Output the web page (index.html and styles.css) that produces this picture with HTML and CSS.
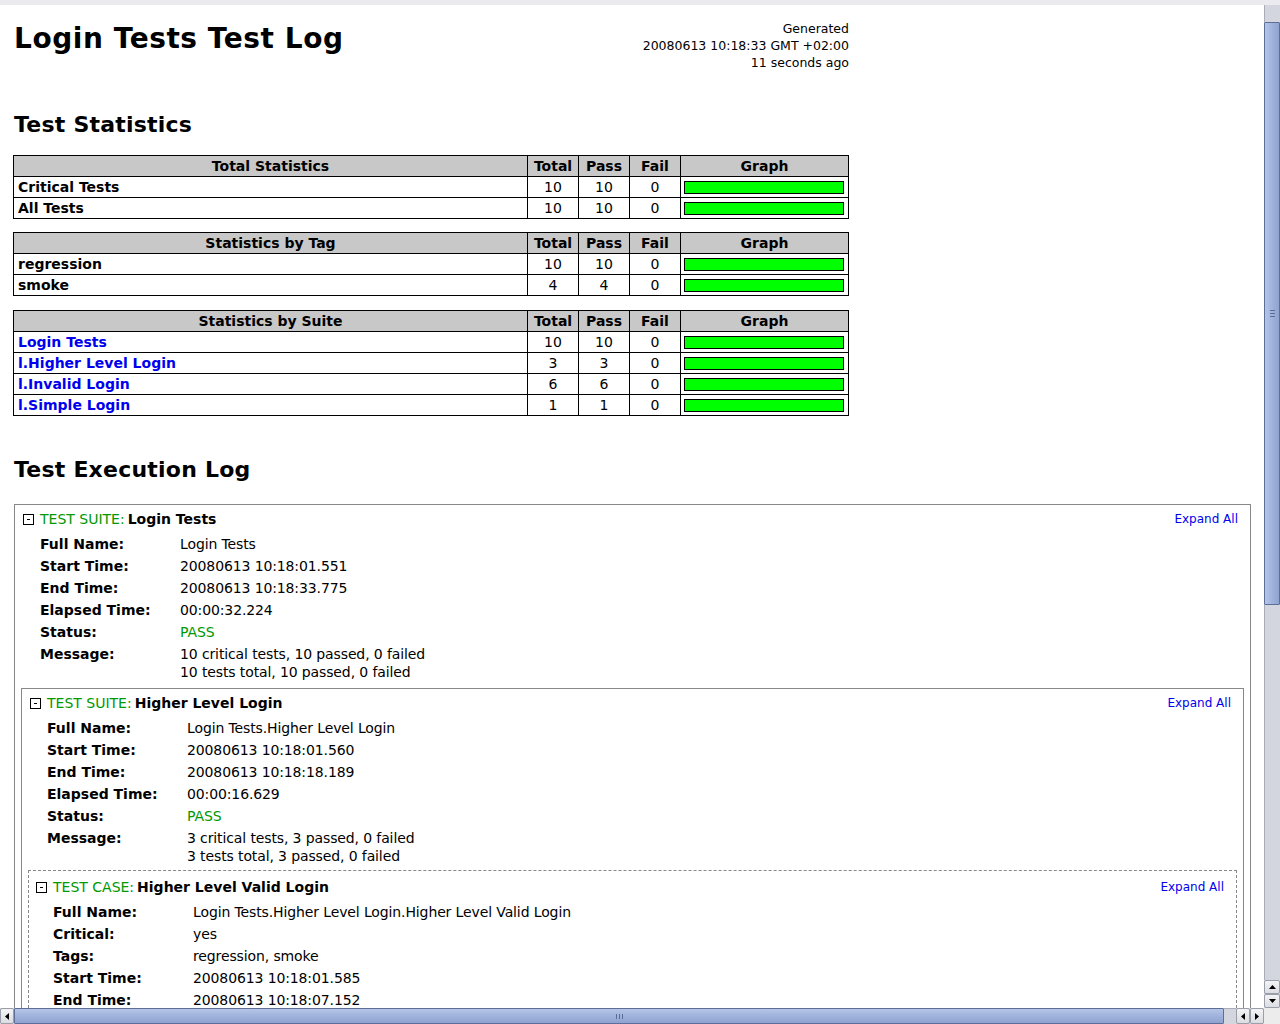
FILE: index.html
```html
<!DOCTYPE html>
<html>
<head>
<meta charset="utf-8">
<title>Login Tests Test Log</title>
<link rel="stylesheet" href="styles.css">
</head>
<body>
<div class="window">
  <div class="topbar"></div>
  <div class="main">
    <div class="viewport">
      <div class="page">
        <div class="header">
          <h1 class="title">Login Tests Test Log</h1>
          <div class="generated">Generated<br>20080613 10:18:33 GMT +02:00<br>11 seconds ago</div>
        </div>

        <h2 class="section stats-title">Test Statistics</h2>

        <table class="stats first">
          <colgroup><col class="c-name"><col class="c-num"><col class="c-num"><col class="c-num"><col class="c-graph"></colgroup>
          <tr><th>Total Statistics</th><th>Total</th><th>Pass</th><th>Fail</th><th>Graph</th></tr>
          <tr><td class="name">Critical Tests</td><td class="num">10</td><td class="num">10</td><td class="num">0</td><td class="graph"><div class="bar"></div></td></tr>
          <tr><td class="name">All Tests</td><td class="num">10</td><td class="num">10</td><td class="num">0</td><td class="graph"><div class="bar"></div></td></tr>
        </table>

        <table class="stats">
          <colgroup><col class="c-name"><col class="c-num"><col class="c-num"><col class="c-num"><col class="c-graph"></colgroup>
          <tr><th>Statistics by Tag</th><th>Total</th><th>Pass</th><th>Fail</th><th>Graph</th></tr>
          <tr><td class="name">regression</td><td class="num">10</td><td class="num">10</td><td class="num">0</td><td class="graph"><div class="bar"></div></td></tr>
          <tr><td class="name">smoke</td><td class="num">4</td><td class="num">4</td><td class="num">0</td><td class="graph"><div class="bar"></div></td></tr>
        </table>

        <table class="stats">
          <colgroup><col class="c-name"><col class="c-num"><col class="c-num"><col class="c-num"><col class="c-graph"></colgroup>
          <tr><th>Statistics by Suite</th><th>Total</th><th>Pass</th><th>Fail</th><th>Graph</th></tr>
          <tr><td class="name"><a href="#">Login Tests</a></td><td class="num">10</td><td class="num">10</td><td class="num">0</td><td class="graph"><div class="bar"></div></td></tr>
          <tr><td class="name"><a href="#">l.Higher Level Login</a></td><td class="num">3</td><td class="num">3</td><td class="num">0</td><td class="graph"><div class="bar"></div></td></tr>
          <tr><td class="name"><a href="#">l.Invalid Login</a></td><td class="num">6</td><td class="num">6</td><td class="num">0</td><td class="graph"><div class="bar"></div></td></tr>
          <tr><td class="name"><a href="#">l.Simple Login</a></td><td class="num">1</td><td class="num">1</td><td class="num">0</td><td class="graph"><div class="bar"></div></td></tr>
        </table>

        <h2 class="section log-title">Test Execution Log</h2>

        <div class="box suite top-suite">
          <div class="box-head">
            <svg class="toggle" width="11" height="11" viewBox="0 0 11 11"><rect x="0.5" y="0.5" width="10" height="10" fill="#fff" stroke="#000"/><rect x="4" y="5" width="3" height="1" fill="#000"/></svg>
            <span class="kind">TEST SUITE:</span>
            <span class="box-name">Login Tests</span>
            <a class="expand" href="#">Expand All</a>
          </div>
          <table class="details">
            <tr><th>Full Name:</th><td>Login Tests</td></tr>
            <tr><th>Start Time:</th><td>20080613 10:18:01.551</td></tr>
            <tr><th>End Time:</th><td>20080613 10:18:33.775</td></tr>
            <tr><th>Elapsed Time:</th><td>00:00:32.224</td></tr>
            <tr><th>Status:</th><td class="pass">PASS</td></tr>
            <tr><th>Message:</th><td>10 critical tests, 10 passed, 0 failed<br>10 tests total, 10 passed, 0 failed</td></tr>
          </table>

          <div class="box suite">
            <div class="box-head">
              <svg class="toggle" width="11" height="11" viewBox="0 0 11 11"><rect x="0.5" y="0.5" width="10" height="10" fill="#fff" stroke="#000"/><rect x="4" y="5" width="3" height="1" fill="#000"/></svg>
              <span class="kind">TEST SUITE:</span>
              <span class="box-name">Higher Level Login</span>
              <a class="expand" href="#">Expand All</a>
            </div>
            <table class="details">
              <tr><th>Full Name:</th><td>Login Tests.Higher Level Login</td></tr>
              <tr><th>Start Time:</th><td>20080613 10:18:01.560</td></tr>
              <tr><th>End Time:</th><td>20080613 10:18:18.189</td></tr>
              <tr><th>Elapsed Time:</th><td>00:00:16.629</td></tr>
              <tr><th>Status:</th><td class="pass">PASS</td></tr>
              <tr><th>Message:</th><td>3 critical tests, 3 passed, 0 failed<br>3 tests total, 3 passed, 0 failed</td></tr>
            </table>

            <div class="box test">
              <div class="box-head">
                <svg class="toggle" width="11" height="11" viewBox="0 0 11 11"><rect x="0.5" y="0.5" width="10" height="10" fill="#fff" stroke="#000"/><rect x="4" y="5" width="3" height="1" fill="#000"/></svg>
                <span class="kind">TEST CASE:</span>
                <span class="box-name">Higher Level Valid Login</span>
                <a class="expand" href="#">Expand All</a>
              </div>
              <table class="details">
                <tr><th>Full Name:</th><td>Login Tests.Higher Level Login.Higher Level Valid Login</td></tr>
                <tr><th>Critical:</th><td>yes</td></tr>
                <tr><th>Tags:</th><td>regression, smoke</td></tr>
                <tr><th>Start Time:</th><td>20080613 10:18:01.585</td></tr>
                <tr><th>End Time:</th><td>20080613 10:18:07.152</td></tr>
              </table>
            </div>
          </div>
        </div>
      </div>
    </div>
    <div class="vscroll">
      <div class="vtrack vtrack-top"></div>
      <div class="vthumb"><span class="grip-v"></span></div>
      <div class="vtrack vtrack-rest"></div>
      <div class="sbtn"><svg width="7" height="4" viewBox="0 0 7 4"><polygon points="3.5,0 7,4 0,4" fill="#000"/></svg></div>
      <div class="sbtn"><svg width="7" height="4" viewBox="0 0 7 4"><polygon points="0,0 7,0 3.5,4" fill="#000"/></svg></div>
    </div>
  </div>
  <div class="hscroll">
    <div class="sbtn hbtn"><svg width="4" height="7" viewBox="0 0 4 7"><polygon points="0,3.5 4,0 4,7" fill="#000"/></svg></div>
    <div class="hthumb"><span class="grip-h"></span></div>
    <div class="htrack"></div>
    <div class="sbtn hbtn"><svg width="4" height="7" viewBox="0 0 4 7"><polygon points="0,3.5 4,0 4,7" fill="#000"/></svg></div>
    <div class="sbtn hbtn"><svg width="4" height="7" viewBox="0 0 4 7"><polygon points="0,0 4,3.5 0,7" fill="#000"/></svg></div>
    <div class="corner"></div>
  </div>
</div>
</body>
</html>
```

FILE: styles.css
```css
html, body {
  margin: 0;
  padding: 0;
  background: #ffffff;
}

body {
  font-family: "DejaVu Sans", "Bitstream Vera Sans", Verdana, sans-serif;
  font-size: 14px;
  color: #000;
}

.window {
  width: 1280px;
  height: 1024px;
  display: flex;
  flex-direction: column;
  overflow: hidden;
}

.topbar {
  height: 5px;
  flex: 0 0 5px;
  background: #ebebef;
}

.main {
  flex: 1 1 auto;
  min-height: 0;
  display: flex;
}

.viewport {
  flex: 1 1 auto;
  min-width: 0;
  overflow: hidden;
  background: #fff;
}

.page {
  padding: 18px 13px 0 13px;
}

.header {
  width: 836px;
  display: flex;
  justify-content: space-between;
  align-items: flex-start;
}

.title {
  margin: 0;
  padding-left: 1px;
  font-size: 28px;
  line-height: 32px;
  font-weight: bold;
  letter-spacing: 0.55px;
}

.generated {
  margin-top: -3px;
  font-size: 12.5px;
  line-height: 17px;
  text-align: right;
}

.section {
  margin: 0;
  padding-left: 1px;
  font-size: 22px;
  line-height: 26px;
  font-weight: bold;
  letter-spacing: 0.22px;
}

.stats-title {
  margin-top: 41px;
  margin-bottom: 17px;
}

.log-title {
  margin-top: 41px;
  margin-bottom: 21px;
}

.stats {
  width: 835px;
  table-layout: fixed;
  border-collapse: collapse;
  border: 1px solid #000;
  margin-bottom: 14px;
}

.stats.first {
  margin-bottom: 13px;
}

.c-name { width: 514px; }
.c-num { width: 51px; }
.c-graph { width: 168px; }

.stats th,
.stats td {
  border: 1px solid #000;
  padding: 1px 4px;
  line-height: 18px;
  height: 18px;
  font-size: 14px;
}

.stats th {
  background: #c8c8c8;
  font-weight: bold;
  text-align: center;
}

.stats td.name {
  font-weight: bold;
  text-align: left;
}

.stats td.name a {
  color: #0000ee;
  text-decoration: none;
}

.stats td.num {
  text-align: center;
}

.stats td.graph {
  padding: 0 4px 0 3px;
  vertical-align: middle;
}

.bar {
  height: 11px;
  border: 1px solid #000;
  background: #00ff00;
}

.box {
  padding: 0 6px 6px 6px;
  margin-bottom: 6px;
}

.suite {
  border: 1px solid #888;
}

.top-suite {
  margin-left: 1px;
}

.test {
  border: 1px dashed #888;
  margin-top: -2px;
}

.box-head {
  display: flex;
  align-items: center;
  padding: 5px 6px 0 2px;
  line-height: 18px;
  font-size: 14px;
}

.test > .box-head {
  padding-top: 7px;
  padding-left: 1px;
}

.toggle {
  flex: 0 0 11px;
  margin-right: 6px;
}

.kind {
  color: #009900;
  margin-right: 3px;
}

.box-name {
  font-weight: bold;
}

.expand {
  margin-left: auto;
  font-size: 12px;
  color: #0000ee;
  text-decoration: none;
}

.details {
  border-collapse: collapse;
  margin: 5px 0 5px 19px;
}

.test > .details {
  margin-left: 18px;
}

.details th,
.details td {
  padding: 2px 0;
  line-height: 18px;
  font-size: 14px;
  vertical-align: top;
  text-align: left;
}

.details td {
  letter-spacing: -0.12px;
}

.details th {
  width: 140px;
  font-weight: bold;
}

.details td.pass {
  color: #009900;
}

/* fake scrollbars */
.vscroll {
  flex: 0 0 16px;
  width: 16px;
  display: flex;
  flex-direction: column;
  background: #d3d6de;
}

.vtrack {
  background: #d3d6de;
  border-left: 1px solid #a8adb8;
}

.vtrack-top {
  flex: 0 0 17px;
}

.vtrack-rest {
  flex: 1 1 auto;
}

.vthumb {
  flex: 0 0 583px;
  box-sizing: border-box;
  border: 1px solid #5d6f99;
  border-radius: 1px;
  background: linear-gradient(to right, #b5c5e6, #9fb3dc 50%, #8ea3d0);
  display: flex;
  align-items: center;
  justify-content: center;
}

.grip-v {
  width: 5px;
  height: 5px;
  border-top: 1px solid #5a6c96;
  border-bottom: 1px solid #5a6c96;
  background: linear-gradient(#5a6c96, #5a6c96) center / 5px 1px no-repeat;
}

.sbtn {
  flex: 0 0 14px;
  height: 14px;
  box-sizing: border-box;
  border: 1px solid #9a9ea8;
  border-radius: 2px;
  background: linear-gradient(#f4f4f6, #dcdde2);
  display: flex;
  align-items: center;
  justify-content: center;
}

.hscroll {
  flex: 0 0 16px;
  height: 16px;
  display: flex;
  background: #d3d6de;
}

.hbtn {
  flex: 0 0 14px;
  width: 14px;
  height: 16px;
}

.hthumb {
  flex: 0 0 1210px;
  box-sizing: border-box;
  border: 1px solid #5d6f99;
  border-radius: 1px;
  background: linear-gradient(#b5c5e6, #9fb3dc 50%, #8ea3d0);
  display: flex;
  align-items: center;
  justify-content: center;
}

.grip-h {
  width: 5px;
  height: 5px;
  border-left: 1px solid #5a6c96;
  border-right: 1px solid #5a6c96;
  background: linear-gradient(#5a6c96, #5a6c96) center / 1px 5px no-repeat;
}

.htrack {
  flex: 1 1 auto;
  background: #d3d6de;
  border-top: 1px solid #a8adb8;
}

.corner {
  flex: 0 0 16px;
  background: #ececec;
}
```
